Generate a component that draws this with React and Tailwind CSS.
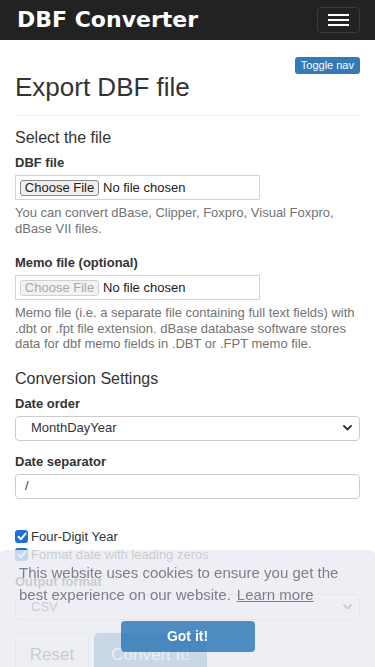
import React from "react";

function FileInput({ disabled }) {
  return (
    <div className="mt-[3px] flex h-[25px] w-[245px] items-center border border-[#d4d4d4] pl-[4px]">
      <div
        className={
          "flex h-[16px] w-[79px] items-center justify-center rounded-[3px] border text-[13px] leading-none " +
          (disabled
            ? "border-[#d0d0d0] bg-[#f2f2f2] text-[#a8a8a8]"
            : "border-[#8a8a8a] bg-[#efefef] text-[#222]")
        }
      >
        Choose File
      </div>
      <span className="ml-[4px] text-[13px] leading-none text-[#222]">No file chosen</span>
    </div>
  );
}

function Chevron() {
  return (
    <svg width="9" height="6" viewBox="0 0 9 6" className="block">
      <path d="M1 1 L4.5 4.5 L8 1" fill="none" stroke="#333" strokeWidth="1.8" strokeLinecap="round" strokeLinejoin="round" />
    </svg>
  );
}

function Check() {
  return (
    <div className="flex h-[13px] w-[13px] items-center justify-center rounded-[3px] bg-[#1f6fdb]">
      <svg width="10" height="9" viewBox="0 0 10 9">
        <path d="M1.5 4.8 L4 7.2 L8.6 1.6" fill="none" stroke="white" strokeWidth="1.9" strokeLinecap="round" strokeLinejoin="round" />
      </svg>
    </div>
  );
}

export default function App() {
  return (
    <div className="relative h-[667px] overflow-hidden bg-white font-['Liberation_Sans',Arial,sans-serif] text-[#333]">
      <nav className="flex h-10 items-center justify-between bg-[#222] pl-[17px] pr-[15px]">
        <span className="font-['DejaVu_Sans',sans-serif] text-[22px] font-bold leading-none text-white">
          DBF Converter
        </span>
        <div className="flex h-[26px] w-[43px] flex-col items-center justify-center gap-[3px] rounded-[4px] border border-[#3a3a3a]">
          <span className="block h-[2px] w-[21px] bg-white" />
          <span className="block h-[2px] w-[21px] bg-white" />
          <span className="block h-[2px] w-[21px] bg-white" />
        </div>
      </nav>

      <div className="px-[15px]">
        <div className="mt-[17px] flex justify-end">
          <div className="h-[17px] rounded-[3px] bg-[#337ab7] px-[6px] text-[11px] leading-[17px] text-white">
            Toggle nav
          </div>
        </div>
        <h1 className="-mt-px text-[26px] font-normal leading-[28px]">Export DBF file</h1>
        <div className="mt-[14px] h-px bg-[#eee]" />

        <div className="mt-[12px] text-[16px] leading-[20px]">Select the file</div>
        <div className="mt-[6px] text-[13px] font-bold leading-[18px]">DBF file</div>
        <FileInput />
        <p className="mt-[5px] text-[13px] leading-[15.5px] text-[#737373]">
          You can convert dBase, Clipper, Foxpro, Visual Foxpro, dBase VII files.
        </p>

        <div className="mt-[18px] text-[13px] font-bold leading-[18px]">Memo file (optional)</div>
        <FileInput disabled />
        <p className="mt-[5px] text-[13px] leading-[15.5px] text-[#737373]">
          Memo file (i.e. a separate file containing full text fields) with .dbt or .fpt file extension. dBase database
          software stores data for dbf memo fields in .DBT or .FPT memo file.
        </p>

        <div className="mt-[17px] text-[16px] leading-[20px]">Conversion Settings</div>
        <div className="mt-[6px] text-[13px] font-bold leading-[18px]">Date order</div>
        <div className="mt-[3px] flex h-[25px] items-center justify-between rounded-[4px] border border-[#ccc] pl-[15px] pr-[7px] text-[13px]">
          <span>MonthDayYear</span>
          <Chevron />
        </div>

        <div className="mt-[12px] text-[13px] font-bold leading-[18px]">Date separator</div>
        <div className="mt-[3px] flex h-[25px] items-center rounded-[4px] border border-[#ccc] pl-[9px] text-[13px]">
          /
        </div>

        <div className="mt-[29px] flex h-[18px] items-center gap-[3px] text-[13px]">
          <Check />
          <span>Four-Digit Year</span>
        </div>
        <div className="flex h-[18px] items-center gap-[3px] text-[13px]">
          <Check />
          <span>Format date with leading zeros</span>
        </div>

        <div className="mt-[9px] text-[13px] font-bold leading-[18px]">Output format</div>
        <div className="mt-[3px] flex h-[26px] items-center justify-between rounded-[4px] border border-[#ccc] pl-[15px] pr-[7px] text-[13px]">
          <span>CSV</span>
          <Chevron />
        </div>

        <div className="mt-[13px] flex gap-[5px]">
          <div className="flex h-[44px] w-[74px] items-center justify-center rounded-[5px] border border-[#ccc] bg-white text-[17px]">
            Reset
          </div>
          <div className="flex h-[44px] w-[113px] items-center justify-center rounded-[5px] border border-[#2e6da4] bg-[#337ab7] text-[17px] text-white">
            Convert It!
          </div>
        </div>
      </div>

      <div className="fixed inset-x-0 bottom-0 h-[117px] rounded-t-[5px] bg-[rgba(234,236,242,0.82)] px-[19px] pt-[12px]">
        <p className="text-[15px] leading-[22px] text-[#7d7e8a]">
          This website uses cookies to ensure you get the best experience on our website.
          <a className="ml-[6px] underline">Learn more</a>
        </p>
        <div className="mx-auto mt-[15px] flex h-[31px] w-[134px] items-center justify-center rounded-[4px] bg-[rgba(51,122,183,0.85)] text-[14px] font-bold text-white">
          Got it!
        </div>
      </div>
    </div>
  );
}
